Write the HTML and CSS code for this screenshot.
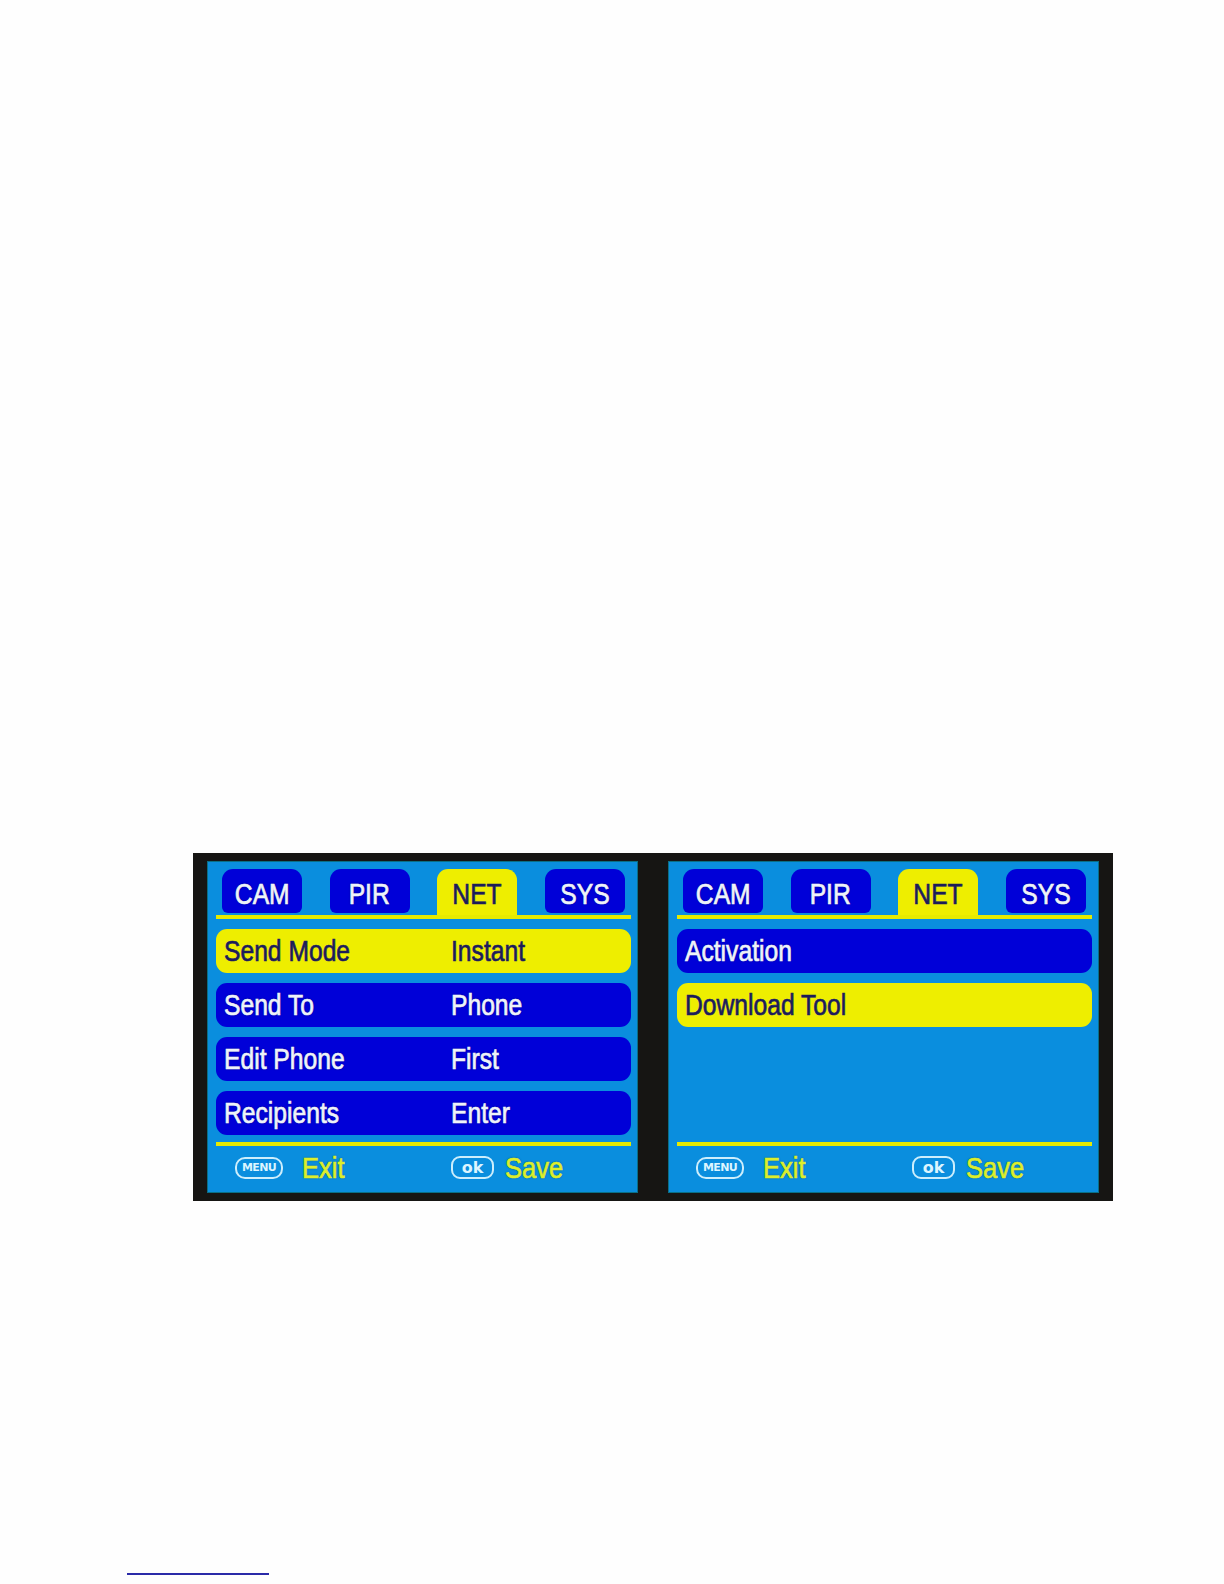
FILE: index.html
```html
<!DOCTYPE html>
<html lang="en">
<head>
<meta charset="utf-8">
<title>NET menu</title>
<link rel="stylesheet" href="styles.css">
</head>
<body>
<div class="frame">
  <div class="panel">
    <div class="tabs">
      <div class="tab"><span class="t">CAM</span></div>
      <div class="tab"><span class="t">PIR</span></div>
      <div class="tab on"><span class="t">NET</span></div>
      <div class="tab"><span class="t">SYS</span></div>
    </div>
    <div class="rule"></div>
    <div class="list">
      <div class="row sel"><span class="label"><span class="t">Send Mode</span></span><span class="value"><span class="t">Instant</span></span></div>
      <div class="row"><span class="label"><span class="t">Send To</span></span><span class="value"><span class="t">Phone</span></span></div>
      <div class="row"><span class="label"><span class="t">Edit Phone</span></span><span class="value"><span class="t">First</span></span></div>
      <div class="row"><span class="label"><span class="t">Recipients</span></span><span class="value"><span class="t">Enter</span></span></div>
    </div>
    <div class="rule"></div>
    <div class="foot">
      <div class="half"><span class="key menu">MENU</span><span class="ftxt"><span class="t">Exit</span></span></div>
      <div class="half second"><span class="key ok">ok</span><span class="ftxt"><span class="t">Save</span></span></div>
    </div>
  </div>
  <div class="panel">
    <div class="tabs">
      <div class="tab"><span class="t">CAM</span></div>
      <div class="tab"><span class="t">PIR</span></div>
      <div class="tab on"><span class="t">NET</span></div>
      <div class="tab"><span class="t">SYS</span></div>
    </div>
    <div class="rule"></div>
    <div class="list">
      <div class="row"><span class="label"><span class="t">Activation</span></span></div>
      <div class="row sel"><span class="label"><span class="t">Download Tool</span></span></div>
    </div>
    <div class="rule"></div>
    <div class="foot">
      <div class="half"><span class="key menu">MENU</span><span class="ftxt"><span class="t">Exit</span></span></div>
      <div class="half second"><span class="key ok">ok</span><span class="ftxt"><span class="t">Save</span></span></div>
    </div>
  </div>
</div>
<div class="link-line"></div>
</body>
</html>
```

FILE: styles.css
```css
html, body {
  margin: 0;
  padding: 0;
  background: #fefefe;
}

body {
  font-family: "Liberation Sans", Arial, sans-serif;
  width: 1224px;
  min-height: 1584px;
  overflow: hidden;
}

.frame {
  margin: 853px 0 0 193px;
  width: 920px;
  height: 348px;
  box-sizing: border-box;
  background: #161513;
  padding: 8px 14px 8px 14px;
  display: flex;
  gap: 30px;
}

.panel {
  width: 431px;
  height: 332px;
  box-sizing: border-box;
  background: #0a8ede;
  padding: 8px 7px 0 9px;
  display: flex;
  flex-direction: column;
  box-shadow: inset 0 0 0 1px #0a6f86;
}

.t {
  display: inline-block;
  transform: scaleX(0.85);
  transform-origin: left center;
  white-space: nowrap;
  -webkit-text-stroke: 0.7px currentColor;
}

.tabs {
  height: 46px;
  display: flex;
  justify-content: space-between;
  align-items: flex-start;
  padding: 0 6px;
}

.tab {
  width: 80px;
  height: 44px;
  box-sizing: border-box;
  background: #0000d8;
  border-radius: 11px 11px 6px 6px;
  display: flex;
  justify-content: center;
  align-items: flex-end;
  padding-bottom: 3px;
  color: #eef3fa;
  font-size: 29px;
  line-height: 32px;
  text-shadow: 0 0 2px rgba(0, 0, 70, 0.8);
}

.tab .t {
  transform-origin: center center;
}

.tab.on {
  height: 46px;
  padding-bottom: 5px;
  background: #eeee00;
  border-radius: 11px 11px 0 0;
  color: #1c1c58;
  text-shadow: 0 0 1px rgba(255, 255, 200, 0.6);
}

.rule {
  height: 4px;
  background: #e6ea00;
  flex: none;
}

.list {
  height: 223px;
  box-sizing: border-box;
  padding: 10px 0 7px;
  display: flex;
  flex-direction: column;
  gap: 10px;
  flex: none;
}

.row {
  height: 44px;
  flex: none;
  box-sizing: border-box;
  background: #0000d8;
  border-radius: 11px;
  display: flex;
  align-items: center;
  padding-left: 8px;
  color: #eef3fa;
  font-size: 29px;
  line-height: 32px;
  text-shadow: 0 0 2px rgba(0, 0, 70, 0.8);
}

.row.sel {
  background: #eeee00;
  color: #1c1c58;
  text-shadow: 0 0 1px rgba(255, 255, 200, 0.6);
}

.label {
  width: 227px;
  flex: none;
}

.foot {
  flex: 1;
  display: flex;
  align-items: center;
  padding-bottom: 4px;
}

.half {
  width: 235px;
  box-sizing: border-box;
  padding-left: 19px;
  display: flex;
  align-items: center;
  flex: none;
}

.half.second {
  padding-left: 0;
  flex: 1;
}

.key {
  display: flex;
  align-items: center;
  justify-content: center;
  box-sizing: border-box;
  border: 2px solid #cdeefc;
  color: #dcf5ff;
  font-weight: bold;
  font-family: "DejaVu Sans", "Liberation Sans", sans-serif;
  flex: none;
}

.key.menu {
  width: 48px;
  height: 22px;
  border-radius: 10px;
  font-size: 11px;
  letter-spacing: -0.6px;
  margin-right: 19px;
}

.key.ok {
  width: 43px;
  height: 23px;
  border-radius: 9px;
  font-size: 16px;
  margin-right: 11px;
}

.ftxt {
  color: #dcef2c;
  font-size: 30px;
  line-height: 32px;
  text-shadow: 0 0 2px rgba(0, 40, 60, 0.8);
}

.link-line {
  margin: 372px 0 0 127px;
  width: 142px;
  height: 0;
  border-top: 2px solid #2a2aa8;
}
```
